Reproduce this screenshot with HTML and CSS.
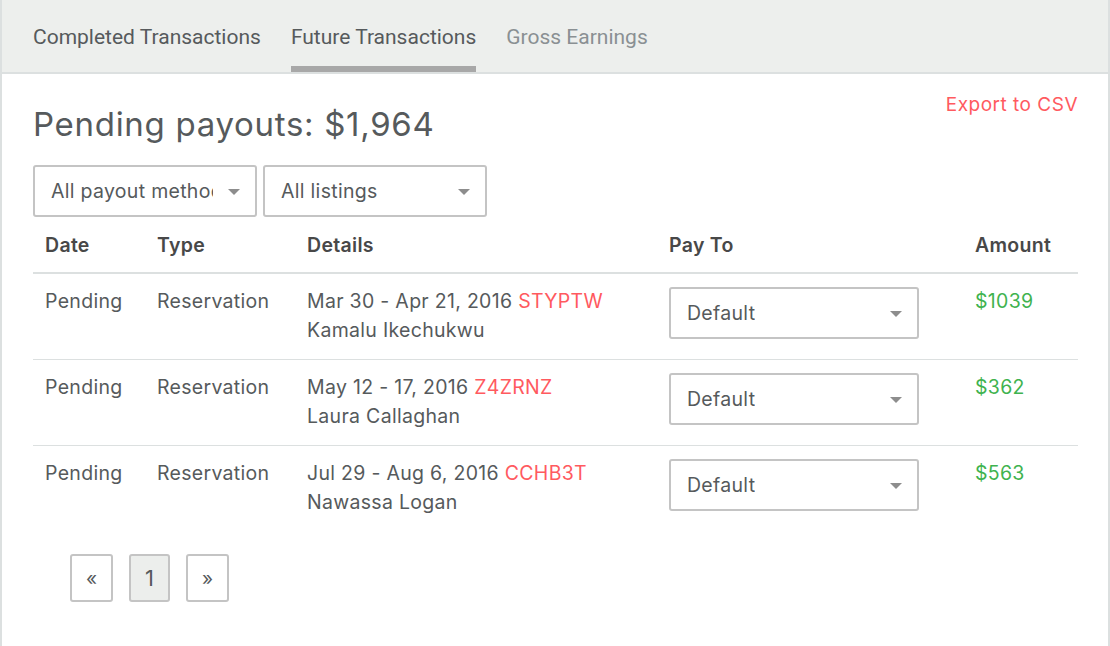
FILE: index.html
```html
<!DOCTYPE html>
<html lang="en">
<head>
    <meta charset="UTF-8">
    <meta name="viewport" content="width=device-width, initial-scale=1.0">
    <title>Future Transactions</title>
    <link rel="stylesheet" href="styles.css">
</head>
<body>
    <div class="page">
        <div class="tabs">
            <a class="tab">Completed Transactions</a>
            <a class="tab active">Future Transactions</a>
            <a class="tab muted">Gross Earnings</a>
        </div>

        <div class="content">
            <div class="head-row">
                <h1 class="title">Pending payouts: $1,964</h1>
                <a class="export-link">Export to CSV</a>
            </div>

            <div class="filters">
                <div class="select-box filter">
                    <span class="select-text">All payout methods</span>
                </div>
                <div class="select-box filter">
                    <span class="select-text">All listings</span>
                </div>
            </div>

            <table class="payouts">
                <colgroup>
                    <col class="col-date">
                    <col class="col-type">
                    <col class="col-details">
                    <col class="col-payto">
                    <col class="col-amount">
                </colgroup>
                <thead>
                    <tr>
                        <th>Date</th>
                        <th>Type</th>
                        <th>Details</th>
                        <th>Pay To</th>
                        <th>Amount</th>
                    </tr>
                </thead>
                <tbody>
                    <tr>
                        <td>Pending</td>
                        <td>Reservation</td>
                        <td>Mar 30 - Apr 21, 2016 <span class="code">STYPTW</span><br>Kamalu Ikechukwu</td>
                        <td><div class="select-box payto"><span class="select-text">Default</span></div></td>
                        <td class="amount">$1039</td>
                    </tr>
                    <tr>
                        <td>Pending</td>
                        <td>Reservation</td>
                        <td>May 12 - 17, 2016 <span class="code">Z4ZRNZ</span><br>Laura Callaghan</td>
                        <td><div class="select-box payto"><span class="select-text">Default</span></div></td>
                        <td class="amount">$362</td>
                    </tr>
                    <tr>
                        <td>Pending</td>
                        <td>Reservation</td>
                        <td>Jul 29 - Aug 6, 2016 <span class="code">CCHB3T</span><br>Nawassa Logan</td>
                        <td><div class="select-box payto"><span class="select-text">Default</span></div></td>
                        <td class="amount">$563</td>
                    </tr>
                </tbody>
            </table>

            <div class="pager">
                <a class="page-btn">&laquo;</a>
                <a class="page-btn current">1</a>
                <a class="page-btn">&raquo;</a>
            </div>
        </div>
    </div>
</body>
</html>
```

FILE: styles.css
```css
body {
    margin: 0;
    background-color: #fff;
    color: #565a5c;
    font-family: "Inter", "Liberation Sans", sans-serif;
}

.page {
    min-height: 646px;
    border-left: 2px solid #dce0e0;
    border-right: 2px solid #dce0e0;
    box-sizing: border-box;
}

.tabs {
    display: flex;
    gap: 30px;
    height: 72px;
    padding-left: 31px;
    background-color: #edefed;
    border-bottom: 2px solid #dce0e0;
    box-sizing: content-box;
}

.tab {
    display: flex;
    align-items: center;
    padding-top: 8px;
    font-family: "Roboto", sans-serif;
    font-size: 21px;
    color: #565a5c;
    border-bottom: 6px solid transparent;
    box-sizing: border-box;
}

.tab.active {
    border-bottom-color: #a8a8a8;
}

.tab.muted {
    color: #8a9093;
}

.content {
    padding: 0 30px 0 31px;
}

.head-row {
    display: flex;
    justify-content: space-between;
    align-items: flex-start;
}

.title {
    margin: 28px 0 0;
    font-size: 33px;
    font-weight: 400;
    line-height: 44px;
    letter-spacing: 0.7px;
    color: #565a5c;
}

.export-link {
    margin-top: 17px;
    font-size: 19px;
    line-height: 28px;
    letter-spacing: 0.5px;
    color: #ff5a5f;
}

.filters {
    display: flex;
    gap: 6px;
    margin-top: 19px;
}

.select-box {
    position: relative;
    display: flex;
    align-items: center;
    height: 52px;
    padding: 0 42px 0 16px;
    border: 2px solid #c4c4c4;
    border-radius: 3px;
    background-color: #fff;
    box-sizing: border-box;
    font-size: 19.5px;
    letter-spacing: 0.3px;
    color: #565a5c;
}

.select-box::after {
    content: "";
    position: absolute;
    right: 15px;
    top: 22px;
    border-left: 6px solid transparent;
    border-right: 6px solid transparent;
    border-top: 6px solid #8d8d8d;
}

.select-text {
    white-space: nowrap;
    overflow: hidden;
}

.filter {
    width: 224px;
}

.payto {
    width: 250px;
}

.payouts {
    width: 100%;
    margin-top: 8px;
    border-collapse: collapse;
    table-layout: fixed;
    font-size: 19.5px;
    letter-spacing: 0.3px;
}

.col-date { width: 112px; }
.col-type { width: 150px; }
.col-details { width: 362px; }
.col-payto { width: 306px; }

.payouts th {
    padding: 7px 12px 13px;
    text-align: left;
    font-weight: 600;
    line-height: 27px;
    color: #484848;
    border-bottom: 2px solid #dce0e0;
}

.payouts td {
    padding: 13px 12px 14px;
    vertical-align: top;
    line-height: 29px;
    border-bottom: 1px solid #dce0e0;
}

.payouts tbody tr:last-child td {
    border-bottom: none;
}

.code {
    color: #ff5a5f;
}

.amount {
    color: #3fb34f;
}

.pager {
    display: flex;
    gap: 16px;
    margin: 23px 0 0 37px;
}

.page-btn {
    display: flex;
    align-items: center;
    justify-content: center;
    width: 43px;
    height: 48px;
    border: 2px solid #c4c4c4;
    border-radius: 3px;
    box-sizing: border-box;
    font-size: 19px;
    color: #565a5c;
}

.page-btn.current {
    width: 41px;
    background-color: #eceeec;
    font-size: 22px;
}
```
